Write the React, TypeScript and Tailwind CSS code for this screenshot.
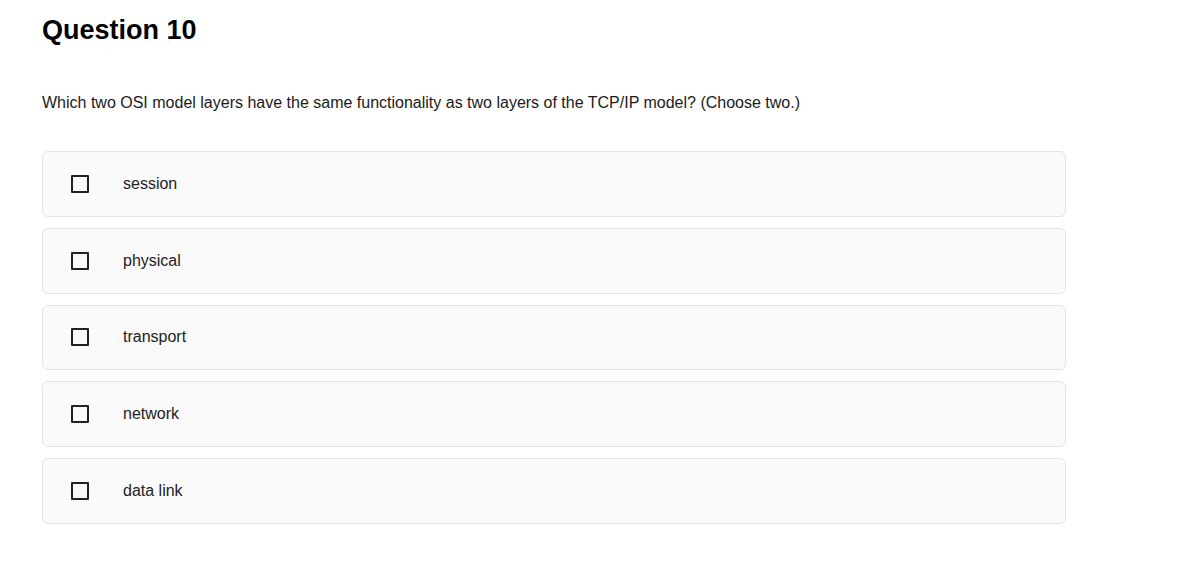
const options = ["session", "physical", "transport", "network", "data link"];

export default function App() {
  return (
    <main
      className="min-h-screen bg-white pl-[42px] pt-[14px] text-[#111]"
      style={{ fontFamily: '"Liberation Sans", Arial, sans-serif' }}
    >
      <h1 className="text-[27px] font-bold leading-[32px] text-black">Question 10</h1>

      <p className="mt-[45px] text-[16px] leading-[24px] text-[#1a1a1a]">
        Which two OSI model layers have the same functionality as two layers of the TCP/IP model? (Choose two.)
      </p>

      <div className="mt-[36px] flex w-[1024px] flex-col gap-[11px]">
        {options.map((opt) => (
          <label
            key={opt}
            className="flex h-[65.75px] cursor-pointer items-center rounded-[6px] border border-[#e4e4e7] bg-[#fafafa] pl-[28px]"
          >
            <span className="h-[18px] w-[18px] rounded-[1px] border-2 border-[#222]" />
            <span className="ml-[34px] text-[16px] text-[#222]">{opt}</span>
          </label>
        ))}
      </div>
    </main>
  );
}
